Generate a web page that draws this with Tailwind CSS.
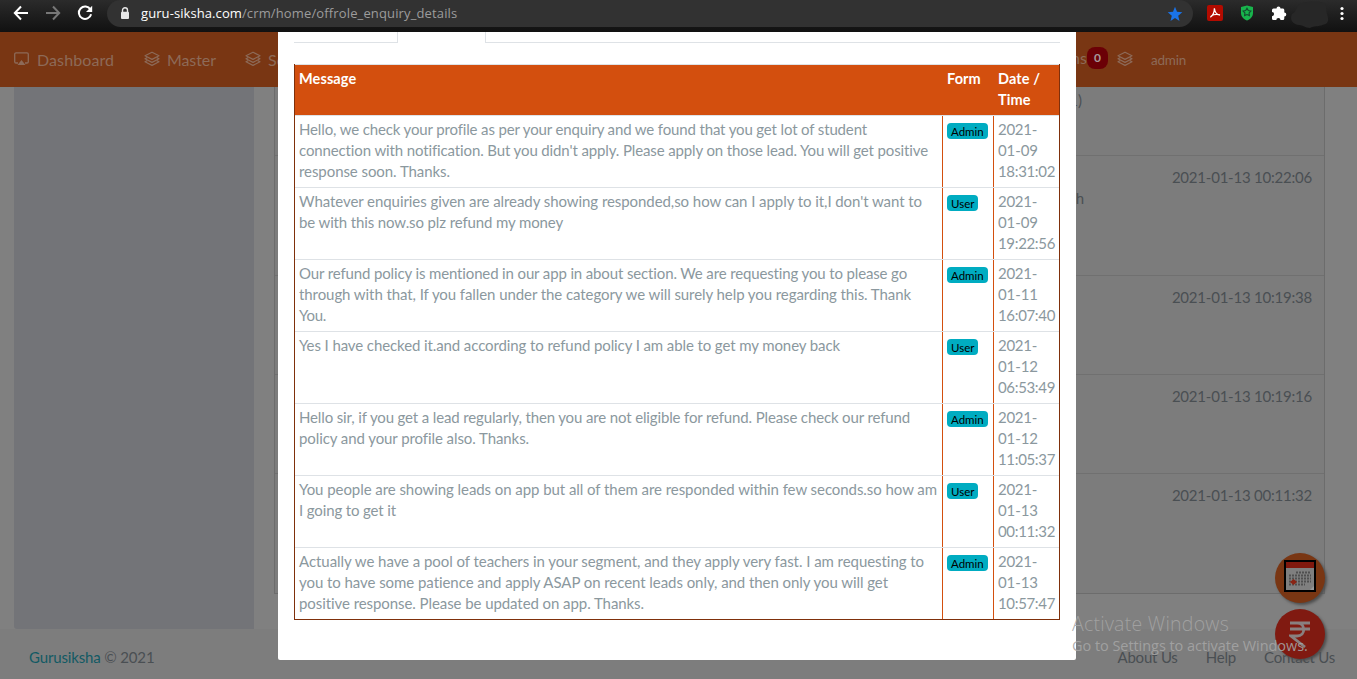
<!DOCTYPE html>
<html lang="en">
<head>
<meta charset="utf-8">
<title>Gurusiksha CRM</title>
<script src="https://cdn.jsdelivr.net/npm/@tailwindcss/browser@4"></script>
</head>
<body class="relative flex h-[679px] w-[1357px] flex-col overflow-hidden bg-[#808080] font-[Lato,sans-serif] text-[15px] leading-[21px] text-[#4a4f53]">

<svg class="hidden">
  <symbol id="layers" viewBox="0 0 16 16"><g fill="none" stroke="currentColor" stroke-width="1.2" stroke-linejoin="round"><path d="M8 1.2 15 4.8 8 8.4 1 4.8Z"/><path d="M3.3 6.6 1 7.8 8 11.4 15 7.8 12.7 6.6"/><path d="M3.3 9.6 1 10.8 8 14.4 15 10.8 12.7 9.6"/></g></symbol>
</svg>

<!-- Browser toolbar -->
<header class="relative z-30 flex h-8 shrink-0 items-start bg-linear-to-b from-[#2b2b2b] to-[#111] font-['Open_Sans',sans-serif]">
  <div class="flex h-[26px] w-[107px] shrink-0 items-center gap-[18px] pl-[13px]">
    <svg class="h-4 w-4 shrink-0" viewBox="0 0 16 16" fill="none" stroke="#fff" stroke-width="2"><path d="M15 8H2M8 1.5 1.8 8 8 14.5"/></svg>
    <svg class="-ml-[2px] h-4 w-4 shrink-0" viewBox="0 0 16 16" fill="none" stroke="#777" stroke-width="2"><path d="M1 8H14M8 1.5 14.2 8 8 14.5"/></svg>
    <svg class="-ml-[2px] h-4 w-4 shrink-0" viewBox="0 0 16 16" fill="none" stroke="#fff" stroke-width="2"><path d="M13.4 4.6A6.2 6.2 0 1 0 14.1 9.2"/><path fill="#fff" stroke="none" d="M15.2.8V7H9Z"/></svg>
  </div>
  <div class="flex h-[27px] w-[1086px] shrink-0 items-center rounded-r-full rounded-l-full bg-[#323232] pr-[10px] pl-[13px]">
    <svg class="h-[13px] w-[10px]" viewBox="0 0 10 13"><path d="M2.5 5V3.3a2.5 2.5 0 0 1 5 0V5" fill="none" stroke="#e8e8e8" stroke-width="1.4"/><rect x="1" y="4.7" width="8" height="7.3" rx="1" fill="#e8e8e8"/></svg>
    <span class="ml-[11px] text-[13px] tracking-[0.08px] text-white">guru-siksha.com<span class="tracking-[0.14px] text-[#9c9c9c]">/crm/home/offrole_enquiry_details</span></span>
    <svg class="ml-auto h-4 w-4" viewBox="0 0 16 16" fill="#1a73e8"><path d="m8 .8 2 5 5.3.4-4.1 3.5 1.3 5.2L8 12.1l-4.5 2.8 1.3-5.2L.7 6.2 6 5.800Z"/></svg>
  </div>
  <div class="flex h-[26px] grow items-center pl-[14px]">
    <svg class="h-4 w-4 shrink-0" viewBox="0 0 16 16"><rect width="16" height="16" rx="2" fill="#b30b00"/><path d="M7.4 3.300C7.400 7.500 6 10.500 3.300 12.200M7.400 3.500C7.800 7.200 9.600 9.600 13 10.200M4 11C6.500 9.500 9.500 9 13 9.800" fill="none" stroke="#fff" stroke-width="1.300"/></svg>
    <svg class="ml-[17px] h-4 w-[14px] shrink-0" viewBox="0 0 14 16"><path d="M7 .5 13 2v6c0 3.500-2.500 6-6 7.500C3.500 14 1 11.500 1 8V2Z" fill="#18b44c"/><path d="m7 3.200 1.300 2.300 2.600.5-1.800 1.900.3 2.700L7 9.500l-2.400 1.100.3-2.700L3.100 6l2.600-.5Z" fill="none" stroke="#154b30" stroke-width="1.100"/></svg>
    <svg class="ml-[17px] h-4 w-4 shrink-0" viewBox="0 0 16 16" fill="#fff"><path d="M1 5a1.500 1.500 0 0 1 1.500-1.500H5.500a2 2 0 0 1 4 0H12A1.500 1.500 0 0 1 13.300 5V7.500a2 2 0 0 1 0 4V13.500a1.500 1.500 0 0 1-1.500 1.500H9.500a2.100 2.100 0 0 0-4.200 0H2.500A1.500 1.500 0 0 1 1 13.500v-2.300A2.100 2.100 0 0 0 1 7Z"/></svg>
    <svg class="ml-[2px] h-[28px] w-[40px] shrink-0 translate-y-[2px]" viewBox="0 0 40 26" preserveAspectRatio="none" fill="#272727"><path d="M12 2c7-2 18-2 24 0 2 3 1 7 2 10 2 5 2 9-4 10-5 2-9 1-13 3-5 0-7-3-13-3-6-2-7-6-5-10 5-2 4-8 9-10Z"/></svg>
    <svg class="ml-[11px] h-4 w-1 shrink-0" viewBox="0 0 4 16" fill="#fff"><circle cx="2" cy="3.500" r="1.600"/><circle cx="2" cy="8.500" r="1.600"/><circle cx="2" cy="13.500" r="1.600"/></svg>
  </div>
</header>

<!-- Navigation -->
<nav class="flex h-[55px] shrink-0 items-center bg-[#793613] pb-px text-[16px] text-[#8d6a58]">
  <svg class="ml-[14px] h-[14px] w-[15px]" viewBox="0 0 15 14"><path d="M4 11H2a1.300 1.300 0 0 1-1.300-1.300V2.200A1.300 1.300 0 0 1 2 .9h11a1.300 1.300 0 0 1 1.300 1.300v7.500A1.300 1.300 0 0 1 13 11h-2" fill="none" stroke="currentColor" stroke-width="1.300"/><path d="m7.500 8 4 5h-8Z" fill="currentColor"/></svg>
  <span class="ml-[8px] w-[107px] tracking-[0.1px]">Dashboard</span>
  <svg class="h-4 w-4"><use href="#layers"/></svg>
  <span class="ml-[7px] w-[78px] tracking-[-0.1px]">Master</span>
  <svg class="h-4 w-4"><use href="#layers"/></svg>
  <span class="ml-[7px]">Services</span>
  <div class="ml-auto flex w-[287px] items-center">
    <span class="-mt-[3px] w-[17px] pl-px text-[16px]">ns</span>
    <span class="-mt-[3px] flex h-[22px] w-[21px] shrink-0 items-center justify-center rounded-[8px] bg-[#6b0006] text-[12px] font-bold text-[#a7989a]">0</span>
    <svg class="ml-[9px] h-4 w-4"><use href="#layers"/></svg>
    <span class="mt-[2px] ml-[18px] text-[13.500px] tracking-[-0.200px]">admin</span>
  </div>
</nav>

<!-- Page behind the dialog -->
<main class="flex h-[542px] shrink-0 bg-[#808080] pl-[14px]">
  <aside class="w-[240px] rounded-bl-[3px] bg-[#737478]"></aside>
  <section class="ml-[20px] flex h-[507px] w-[1051px] flex-col border-x border-b border-[#6c6c6c] bg-[#7c7c7c]">
    <div class="h-[69px] shrink-0 border-b border-[#707070] pt-[3px] pr-[242px] text-right">(1)</div>
    <div class="h-[120px] shrink-0 border-b border-[#707070] pt-[11px] pr-[12px] text-right tracking-[-0.220px]">2021-01-13 10:22:06<p class="pr-[228px]">h</p></div>
    <div class="h-[99px] shrink-0 border-b border-[#707070] pt-[11px] pr-[12px] text-right tracking-[-0.220px]">2021-01-13 10:19:38</div>
    <div class="h-[99px] shrink-0 border-b border-[#707070] pt-[11px] pr-[12px] text-right tracking-[-0.220px]">2021-01-13 10:19:16</div>
    <div class="pt-[11px] pr-[12px] text-right tracking-[-0.220px]">2021-01-13 00:11:32</div>
  </section>
</main>
<footer class="flex h-[50px] shrink-0 justify-between bg-[#7d7d7d] pt-[18px] pr-[22px] pl-[29px]">
  <p class="tracking-[-0.150px]"><span class="text-[#125a64]">Gurusiksha</span> © 2021</p>
  <p class="flex gap-[28px] tracking-[-0.200px]"><span>About Us</span><span>Help</span><span>Contact Us</span></p>
</footer>

<!-- Floating buttons -->
<div class="absolute top-[553px] left-[1275px] z-10 flex flex-col gap-[6px]">
  <div class="flex h-[50px] w-[50px] items-center justify-center rounded-full bg-[#793613] shadow-[2px_2px_3px_#4d4d4d]">
    <svg class="-mt-[4px] h-8 w-8" viewBox="0 0 32 32"><rect x="1" y="1" width="30" height="30" fill="#7f7f7f" stroke="#000" stroke-width="2"/><path d="M2 2h28v6H2Z" fill="#80180d"/><path d="M12 12.500h15M5 15.500h22M5 18.500h22M5 21.500h22M5 24.500h16" stroke="#505050" stroke-width="2" stroke-dasharray="2 1"/><path d="m9.500 19 3.500 3-3.500 3L6 22Z" fill="#8a2414"/><path d="m26 30 4-4v4Z" fill="#999"/></svg>
  </div>
  <div class="flex h-[50px] w-[50px] items-center justify-center rounded-full bg-[#801a11] shadow-[2px_2px_3px_#4d4d4d]">
    <svg class="h-[28px] w-[22px]" viewBox="0 0 22 28" fill="none" stroke="#898080" stroke-width="2.800"><path d="M1 3h20M1 9h20M1 3h7c9 0 9 13 0 13H2l14 11"/></svg>
  </div>
</div>

<!-- Conversation dialog -->
<div class="absolute top-[32px] left-[278px] z-20 flex h-[628px] w-[798px] flex-col rounded-b-[2px] bg-white px-4 text-[#8b989e]">
  <div class="flex h-[11px] shrink-0 justify-between">
    <div class="w-[104px] border-r border-b border-[#dee2e6]"></div>
    <div class="w-[575px] border-b border-l border-[#dee2e6]"></div>
  </div>
  <div class="mt-[21px] border-x border-b border-[#7f300b]">
    <div class="grid h-[52px] grid-cols-[648px_51px_65px] border-y border-[#dee2e6] bg-[#d34f0e] pt-[3px] text-[14.500px] font-bold tracking-[0.100px] text-white">
      <div class="pl-1">Message</div><div class="pl-1">Form</div><div class="pl-1">Date /<br>Time</div>
    </div>
    <div id="rows"></div>
  </div>
</div>

<!-- System watermark -->
<div class="absolute top-[611px] left-[1072px] z-40 font-['Open_Sans',sans-serif] whitespace-nowrap text-[#a5a5a5]/90">
  <p class="text-[19.500px] leading-[25px] font-light tracking-[0.250px]">Activate Windows</p>
  <p class="text-[14.500px] leading-[20px] tracking-[-0.050px]">Go to Settings to activate Windows.</p>
</div>

<template id="row">
  <div class="grid h-[72px] grid-cols-[648px_51px_65px] border-b border-[#dee2e6]">
    <p class="border-r border-[#d34f0e] pt-[3px] pl-1 whitespace-pre"></p>
    <div class="border-r border-[#d34f0e] pt-[7px] pl-1"><span class="flex h-4 w-fit items-center rounded-[4px] bg-[#00acc1] px-1 text-[11.500px] text-black"></span></div>
    <p class="pt-[3px] pl-1 whitespace-pre"></p>
  </div>
</template>
<script>
const messages = [
  [["Hello, we check your profile as per your enquiry and we found that you get lot of student", 568], ["connection with notification. But you didn't apply. Please apply on those lead. You will get positive", 629], ["response soon. Thanks.", 151], "Admin", "2021-", "01-09", "18:31:02"],
  [["Whatever enquiries given are already showing responded,so how can I apply to it,I don't want to", 623], ["be with this now.so plz refund my money", 264], "User", "2021-", "01-09", "19:22:56"],
  [["Our refund policy is mentioned in our app in about section. We are requesting you to please go", 608], ["through with that, If you fallen under the category we will surely help you regarding this. Thank", 612], ["You.", 27], "Admin", "2021-", "01-11", "16:07:40"],
  [["Yes I have checked it.and according to refund policy I am able to get my money back", 541], "User", "2021-", "01-12", "06:53:49"],
  [["Hello sir, if you get a lead regularly, then you are not eligible for refund. Please check our refund", 611], ["policy and your profile also. Thanks.", 230], "Admin", "2021-", "01-12", "11:05:37"],
  [["You people are showing leads on app but all of them are responded within few seconds.so how am", 638], ["I going to get it", 97], "User", "2021-", "01-13", "00:11:32"],
  [["Actually we have a pool of teachers in your segment, and they apply very fast. I am requesting to", 625], ["you to have some patience and apply ASAP on recent leads only, and then only you will get", 589], ["positive response. Please be updated on app. Thanks.", 345], "Admin", "2021-", "01-13", "10:57:47"],
];
const rows = document.getElementById("rows");
const fitted = [];
function addLine(parent, text, width) {
  const s = document.createElement("span");
  s.textContent = text;
  parent.append(s, document.createElement("br"));
  fitted.push([s, width]);
}
messages.forEach((m, i) => {
  const r = document.getElementById("row").content.cloneNode(true).firstElementChild;
  rows.append(r);
  const lines = m.filter(Array.isArray), rest = m.filter(x => !Array.isArray(x));
  lines.forEach(([t, w]) => addLine(r.children[0], t, w));
  r.children[1].firstElementChild.textContent = rest[0];
  rest.slice(1).forEach(t => addLine(r.children[2], t, t.length > 6 ? 57 : t.endsWith("-") ? 39 : 40));
  if (i === messages.length - 1) r.classList.replace("border-b", "border-b-0");
});
rows.lastElementChild.classList.replace("h-[72px]", "h-[71px]");

// Adjust tracking until each line has its intended width
function fit() {
  for (let pass = 0; pass < 4; pass++)
    for (const [s, w] of fitted) {
      const spacing = parseFloat(s.style.letterSpacing) || 0;
      s.style.letterSpacing = spacing + (w - s.getBoundingClientRect().width) / s.textContent.length + "px";
    }
}
fit();
addEventListener("load", fit);
</script>
</body>
</html>
